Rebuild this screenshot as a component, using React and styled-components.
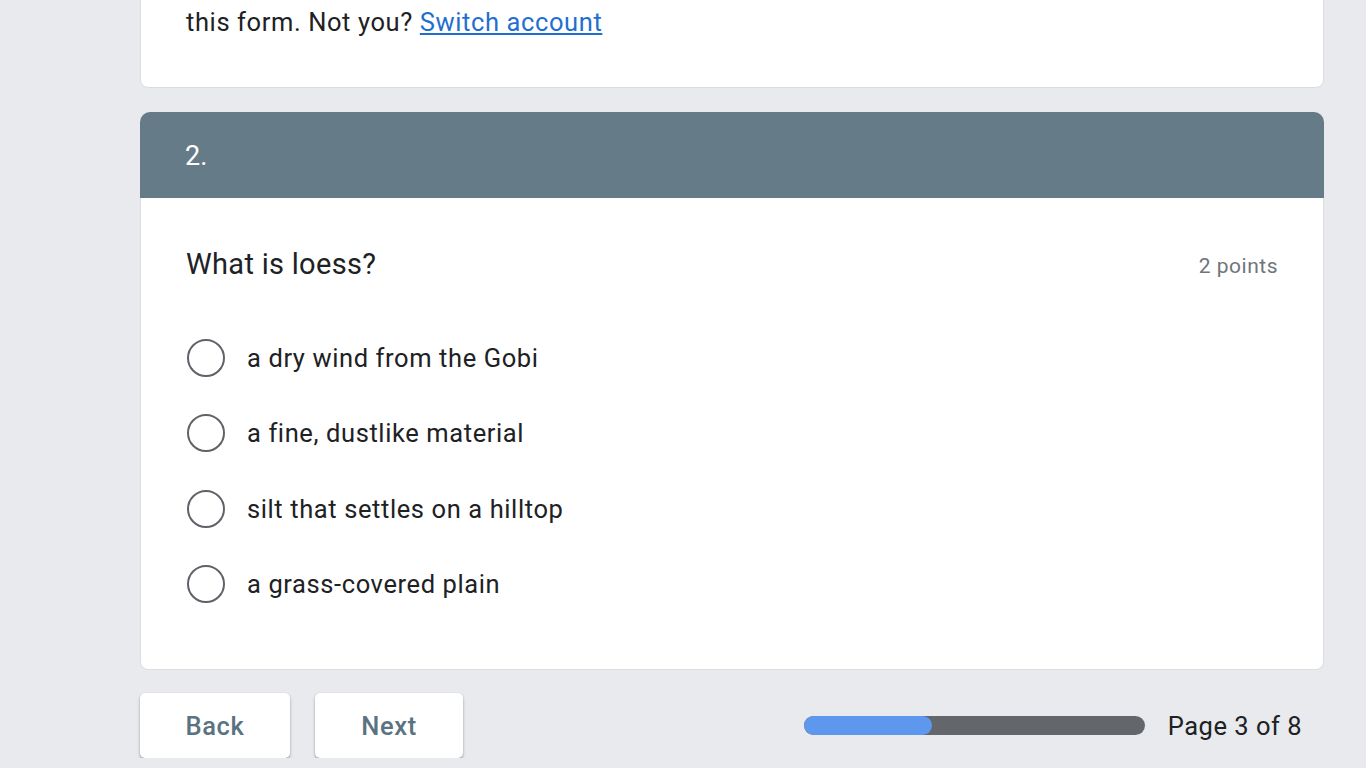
import React from 'react';
import styled, { createGlobalStyle } from 'styled-components';

const GlobalStyle = createGlobalStyle`
  html, body {
    margin: 0;
    padding: 0;
    background: #e8eaed;
    font-family: Roboto, "Liberation Sans", Arial, sans-serif;
    color: #202124;
    overflow: hidden;
  }
`;

const Page = styled.div`
  width: 1184px;
  margin: -57px 0 0 140px;
  display: flex;
  flex-direction: column;
`;

const Card = styled.div`
  background: #fff;
  border: 1px solid #dadce0;
  border-radius: 8px;
`;

const TopCard = styled(Card)`
  padding: 24px 45px 47px;
  font-size: 25.5px;
  letter-spacing: 0.6px;
  line-height: 36px;
  white-space: nowrap;
  overflow: hidden;
`;

const Link = styled.a`
  color: #1f6fd1;
  text-decoration: underline;
`;

const Section = styled.div`
  margin-top: 24px;
  display: flex;
  flex-direction: column;
`;

const Header = styled.div`
  height: 86px;
  background: #667b88;
  border-radius: 10px 10px 0 0;
  color: #fff;
  font-size: 27px;
  display: flex;
  align-items: center;
  padding: 2px 0 0 45px;
  box-sizing: border-box;
`;

const Body = styled.div`
  background: #fff;
  border: 1px solid #dadce0;
  border-top: none;
  border-radius: 0 0 8px 8px;
  padding: 48px 45px 47px;
`;

const QuestionRow = styled.div`
  display: flex;
  justify-content: space-between;
  align-items: center;
  height: 36px;
`;

const Question = styled.div`
  font-size: 29px;
  letter-spacing: 0.3px;
`;

const Points = styled.div`
  font-size: 21px;
  letter-spacing: 0.5px;
  color: #70757a;
  padding-top: 4px;
`;

const Options = styled.div`
  margin-top: 38px;
  display: flex;
  flex-direction: column;
`;

const Option = styled.label`
  height: 75.5px;
  display: flex;
  align-items: center;
  font-size: 25.5px;
  letter-spacing: 0.6px;
  color: #202124;
`;

const Radio = styled.span`
  width: 34px;
  height: 34px;
  border: 2px solid #5f6368;
  border-radius: 50%;
  margin: 0 22px 0 1px;
  flex-shrink: 0;
`;

const Footer = styled.div`
  margin-top: 23px;
  display: flex;
  align-items: center;
  justify-content: space-between;
  padding-right: 22px;
`;

const Buttons = styled.div`
  display: flex;
  gap: 25px;
`;

const Button = styled.button`
  width: ${({ w }) => w}px;
  height: 65px;
  background: #fff;
  border: none;
  border-radius: 5px;
  box-shadow: 0 2px 3px rgba(60, 64, 67, 0.4), 0 0 1px rgba(60, 64, 67, 0.2);
  color: #5b7281;
  font-family: Roboto, "Liberation Sans", Arial, sans-serif;
  font-size: 25.5px;
  font-weight: 500;
  letter-spacing: 0.6px;
`;

const Progress = styled.div`
  display: flex;
  align-items: center;
  gap: 23px;
`;

const Track = styled.div`
  width: 341px;
  height: 19px;
  border-radius: 10px;
  background: #63676b;
  overflow: hidden;
`;

const Fill = styled.div`
  height: 100%;
  background: #5e97ee;
  border-radius: 10px;
`;

const PageLabel = styled.div`
  font-size: 25.5px;
  letter-spacing: 0.5px;
  color: #202124;
`;

const options = [
  'a dry wind from the Gobi',
  'a fine, dustlike material',
  'silt that settles on a hilltop',
  'a grass-covered plain',
];

export default function App() {
  return (
    <>
      <GlobalStyle />
      <Page>
        <TopCard>
          The name and photo associated with your account will be recorded when you upload files and submit
          <br />
          this form. Not you? <Link href="#">Switch account</Link>
        </TopCard>
        <Section>
          <Header>2.</Header>
          <Body>
            <QuestionRow>
              <Question>What is loess?</Question>
              <Points>2 points</Points>
            </QuestionRow>
            <Options>
              {options.map(o => (
                <Option key={o}>
                  <Radio />
                  {o}
                </Option>
              ))}
            </Options>
          </Body>
        </Section>
        <Footer>
          <Buttons>
            <Button w={150}>Back</Button>
            <Button w={148}>Next</Button>
          </Buttons>
          <Progress>
            <Track>
              <Fill style={{ width: `${(3 / 8) * 100}%` }} />
            </Track>
            <PageLabel>Page 3 of 8</PageLabel>
          </Progress>
        </Footer>
      </Page>
    </>
  );
}
